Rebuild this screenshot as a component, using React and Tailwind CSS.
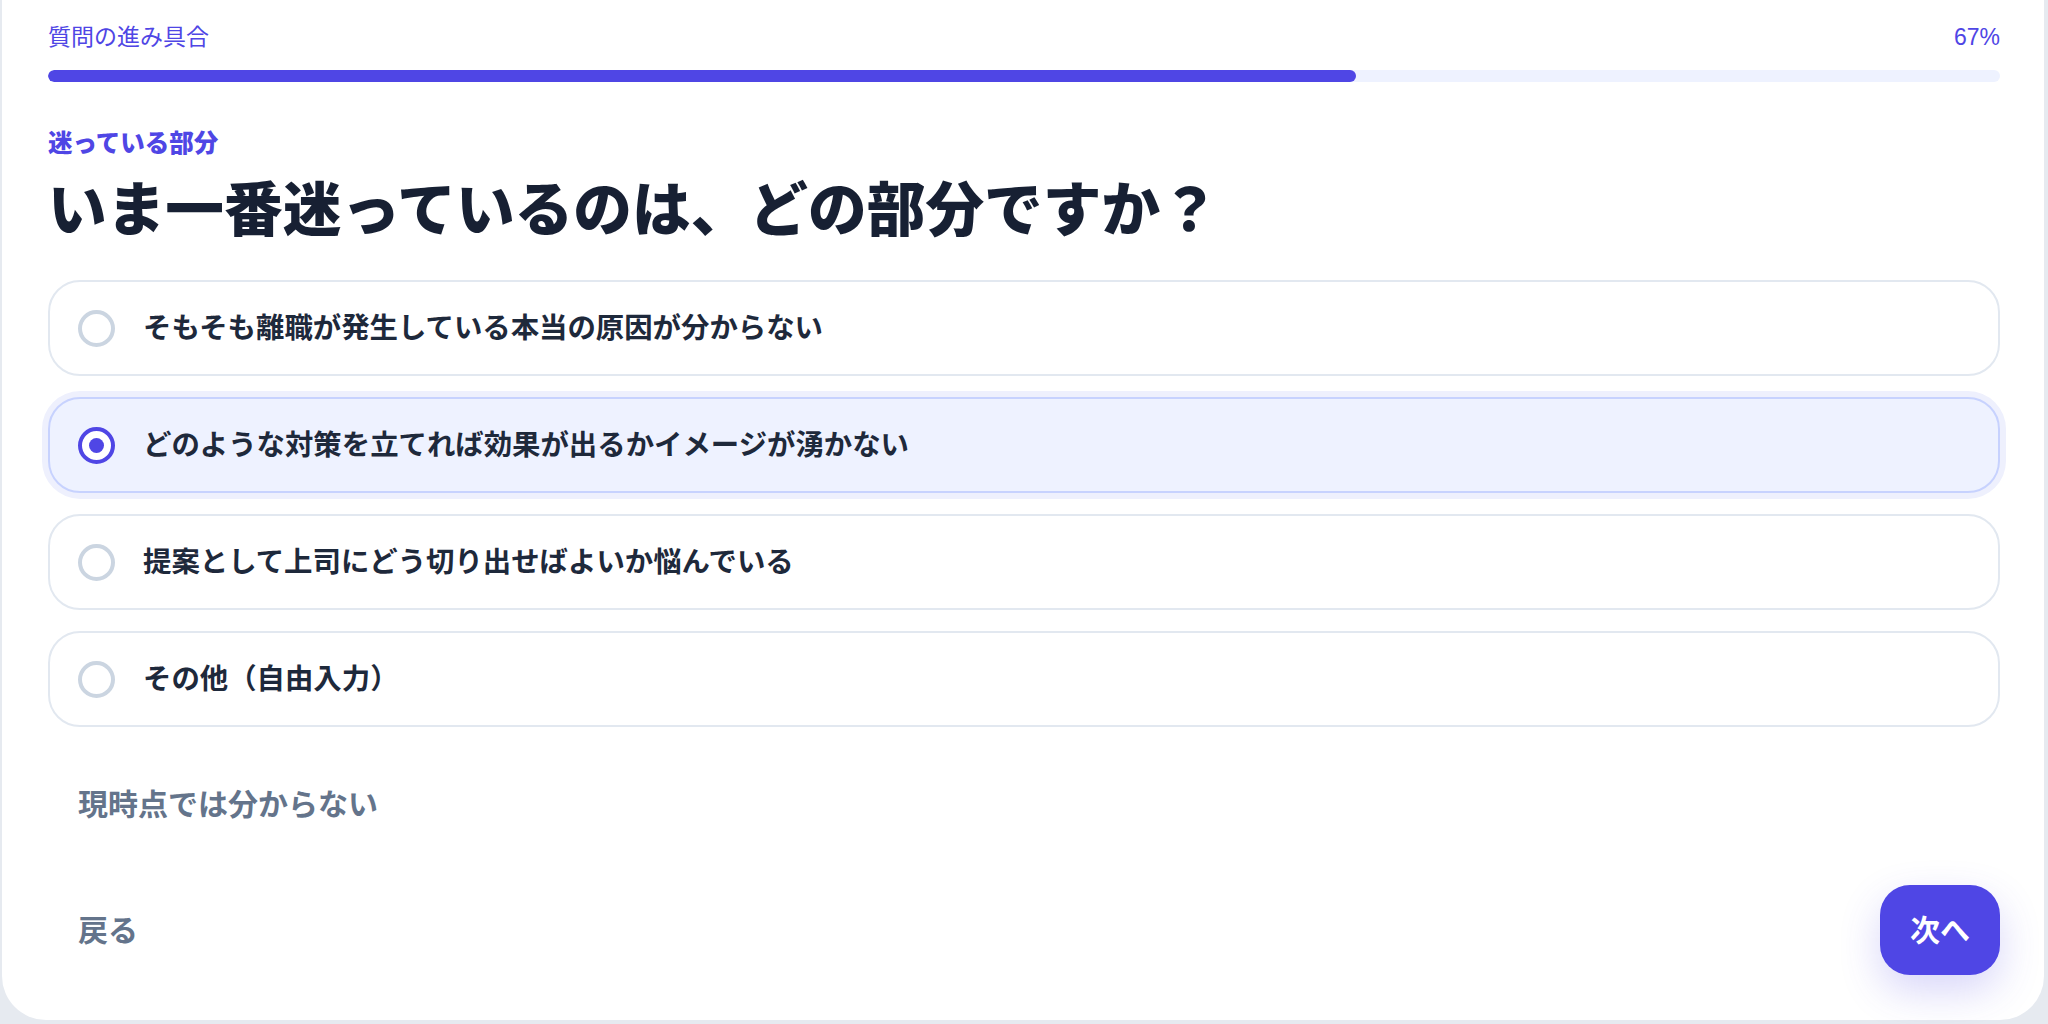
import { useState } from 'react';

const options = [
    'そもそも離職が発生している本当の原因が分からない',
    'どのような対策を立てれば効果が出るかイメージが湧かない',
    '提案として上司にどう切り出せばよいか悩んでいる',
    'その他（自由入力）',
];

function OptionRow({ label, selected, onSelect }) {
    return (
        <button
            type="button"
            onClick={onSelect}
            className={
                selected
                    ? 'h-[96px] w-full rounded-[32px] border-2 border-[#c7d2fe] bg-[#eef2ff] ring-[6px] ring-[#eef0fd] px-[28px] flex items-center gap-[28px] text-left'
                    : 'h-[96px] w-full rounded-[32px] border-2 border-[#e2e8f0] bg-white px-[28px] flex items-center gap-[28px] text-left'
            }
        >
            {selected ? (
                <span className="w-[37px] h-[37px] shrink-0 rounded-full border-4 border-[#4f46e5] bg-white flex items-center justify-center">
                    <span className="w-[15px] h-[15px] rounded-full bg-[#4f46e5]" />
                </span>
            ) : (
                <span className="w-[37px] h-[37px] shrink-0 rounded-full border-4 border-[#cbd5e1] bg-white" />
            )}
            <span className="text-[28.4px] leading-[40px] font-bold text-[#1e293b]">{label}</span>
        </button>
    );
}

export default function App() {
    const [selected, setSelected] = useState(1);
    const progress = 67;

    return (
        <div
            className="min-h-screen bg-[#e6eaf0] pl-[2px] pr-[4px] pb-[4px]"
            style={{ fontFamily: '"Liberation Sans", "Noto Sans CJK JP", sans-serif' }}
        >
            <div className="h-[1020px] bg-white rounded-b-[44px] pl-[46px] pr-[44px] pt-[21px] flex flex-col">
                <div className="flex justify-between items-center text-[23px] leading-[32px] text-[#4f46e5]">
                    <span>質問の進み具合</span>
                    <span>{progress}%</span>
                </div>
                <div className="mt-[17px] h-3 rounded-full bg-[#eef2ff] overflow-hidden">
                    <div className="h-full rounded-full bg-[#4f46e5]" style={{ width: `${progress}%` }} />
                </div>

                <p className="mt-[46px] text-[24.5px] leading-[32px] font-black text-[#4f46e5]">迷っている部分</p>
                <h1 className="mt-[15px] text-[58.7px] leading-[72px] font-black text-[#172033]">
                    いま一番迷っているのは、どの部分ですか？
                </h1>

                <div className="mt-[33px] flex flex-col gap-[21px]">
                    {options.map((label, i) => (
                        <OptionRow key={label} label={label} selected={selected === i} onSelect={() => setSelected(i)} />
                    ))}
                </div>

                <button
                    type="button"
                    className="mt-[49px] h-[56px] self-start pl-[30px] text-[30px] font-bold text-[#64748b]"
                >
                    現時点では分からない
                </button>

                <div className="mt-[53px] flex justify-between items-center">
                    <button type="button" className="pl-[30px] text-[30px] font-bold text-[#64748b]">
                        戻る
                    </button>
                    <button
                        type="button"
                        className="w-[120px] h-[90px] rounded-[30px] bg-[#4f46e5] text-white text-[30px] font-bold shadow-[0_16px_40px_rgba(79,70,229,0.22)]"
                    >
                        次へ
                    </button>
                </div>
            </div>
        </div>
    );
}
